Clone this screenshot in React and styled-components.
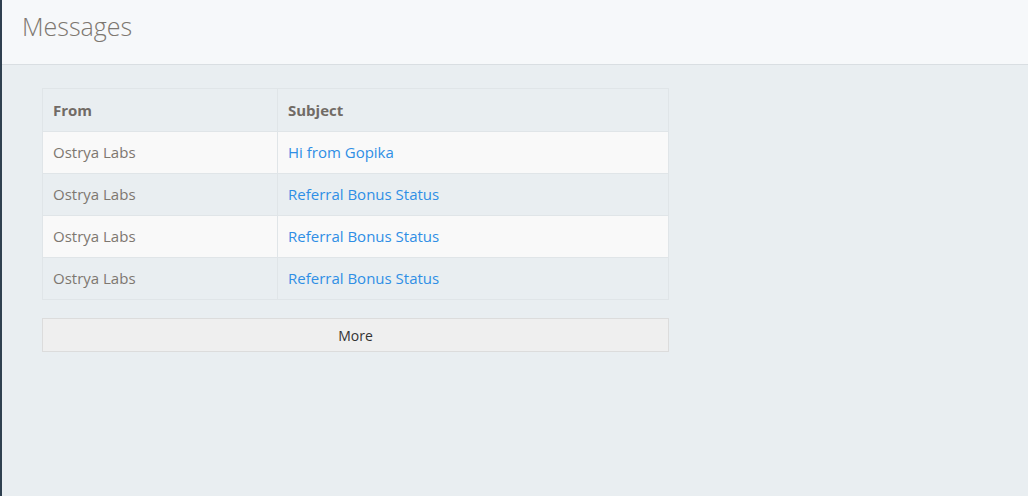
import React from "react";
import styled, { createGlobalStyle } from "styled-components";

const GlobalStyle = createGlobalStyle`
  html, body {
    margin: 0;
    padding: 0;
    height: 100%;
  }
  body {
    font-family: "Open Sans", "Liberation Sans", sans-serif;
    font-size: 15px;
    color: #676a6c;
    background: #e9eef1;
  }
  #root {
    height: 100%;
  }
`;

const Page = styled.div`
  min-height: 496px;
  border-left: 2px solid #2f4050;
  background: #e9eef1;
  box-sizing: border-box;
`;

const Header = styled.div`
  height: 65px;
  box-sizing: border-box;
  background: #f6f8fa;
  border-bottom: 1px solid #d9dee2;
  padding: 0 20px;
  display: flex;
  align-items: center;
`;

const Title = styled.h2`
  margin: 0 0 12px;
  font-size: 25px;
  font-weight: 300;
  color: #7d7770;
`;

const Content = styled.div`
  padding: 23px 40px;
  width: 707px;
  box-sizing: border-box;
  display: flex;
  flex-direction: column;
  gap: 18px;
`;

const Table = styled.table`
  width: 100%;
  border-collapse: collapse;
  border: 1px solid #e0e5e8;
`;

const HeadCell = styled.th`
  text-align: left;
  font-weight: 700;
  height: 41px;
  padding: 0 10px 1px;
  border: 1px solid #e0e5e8;
  background: #e9eef1;
  color: #716b66;
  width: ${(p) => p.width || "auto"};
`;

const Row = styled.tr`
  background: ${(p) => (p.striped ? "#e9eef1" : "#f9f9f9")};
`;

const Cell = styled.td`
  height: 39px;
  padding: 0 10px 2px;
  border: 1px solid #e0e5e8;
  color: #7d7770;
`;

const Link = styled.a`
  color: #2f8ee5;
  text-decoration: none;
  cursor: pointer;
`;

const MoreButton = styled.button`
  width: 100%;
  height: 34px;
  font-family: inherit;
  font-size: 14px;
  color: #333;
  background: #efefef;
  border: 1px solid #dcdcdc;
  cursor: pointer;
`;

const messages = [
  { from: "Ostrya Labs", subject: "Hi from Gopika" },
  { from: "Ostrya Labs", subject: "Referral Bonus Status" },
  { from: "Ostrya Labs", subject: "Referral Bonus Status" },
  { from: "Ostrya Labs", subject: "Referral Bonus Status" },
];

const App = () => {
  return (
    <>
      <GlobalStyle />
      <Page>
        <Header>
          <Title>Messages</Title>
        </Header>
        <Content>
          <Table>
            <thead>
              <tr>
                <HeadCell width="214px">From</HeadCell>
                <HeadCell>Subject</HeadCell>
              </tr>
            </thead>
            <tbody>
              {messages.map((m, i) => (
                <Row key={i} striped={i % 2 === 1}>
                  <Cell>{m.from}</Cell>
                  <Cell>
                    <Link>{m.subject}</Link>
                  </Cell>
                </Row>
              ))}
            </tbody>
          </Table>
          <MoreButton>More</MoreButton>
        </Content>
      </Page>
    </>
  );
};

export default App;
